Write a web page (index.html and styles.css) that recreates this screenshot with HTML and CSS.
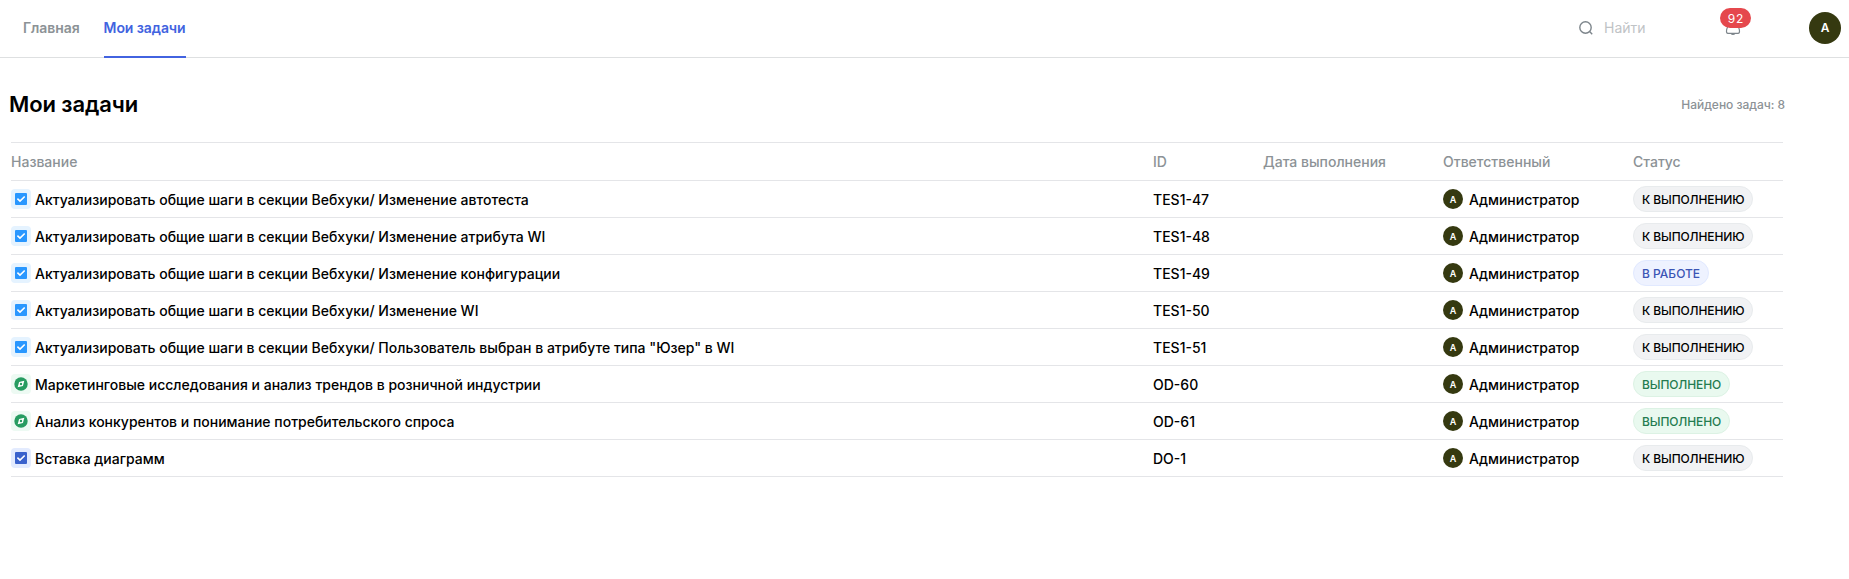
FILE: index.html
```html
<!DOCTYPE html>
<html lang="ru">
<head>
<meta charset="utf-8">
<title>Мои задачи</title>
<link rel="stylesheet" href="styles.css">
</head>
<body>
<svg class="sprite" aria-hidden="true">
  <symbol id="check" viewBox="0 0 20 20">
    <rect x="4" y="4" width="12" height="12" rx="1" fill="currentColor"/>
    <path d="M6.4 9.6 9 12.1 13.7 7.5" fill="none" stroke="#fff" stroke-width="1.6"/>
  </symbol>
  <symbol id="compass" viewBox="0 0 20 20">
    <circle cx="10" cy="10" r="6.7" fill="currentColor"/>
    <path d="M13.3 6.7 11.9 11.9 6.7 13.3 8.1 8.1Z" fill="#fff"/>
    <circle cx="10" cy="10" r="1.2" fill="currentColor"/>
  </symbol>
</svg>
<header class="topbar">
  <nav class="tabs">
    <a class="tab">Главная</a>
    <a class="tab tab-active">Мои задачи</a>
  </nav>
  <div class="tools">
    <div class="search">
      <svg class="search-icon" viewBox="0 0 14 14"><circle cx="6.5" cy="6.5" r="5.7"/><path d="M10.6 10.6 13.2 13.2"/></svg>
      <span>Найти</span>
    </div>
    <div class="bell">
      <svg class="bell-icon" viewBox="0 0 16 18"><path d="M8 1a4.500 4.500 0 0 0-4.500 4.500c0 2-1.600 3-1.900 5.500-.3 2.200 0 3.300 1.400 3.300H13c1.400 0 1.700-1.100 1.400-3.300-.3-2.500-1.900-3.500-1.900-5.500A4.500 4.500 0 0 0 8 1ZM6.300 14.700c.6 1 2.800 1 3.400 0"/></svg>
      <span class="count">92</span>
    </div>
    <div class="avatar avatar-large">A</div>
  </div>
</header>
<main class="page">
  <div class="heading">
    <h1 class="title">Мои задачи</h1>
    <span class="found">Найдено задач: 8</span>
  </div>
  <div class="table">
    <div class="row head"><div>Название</div><div>ID</div><div>Дата выполнения</div><div>Ответственный</div><div>Статус</div></div>
    <div class="row"><div class="name"><svg class="type sky"><use href="#check"/></svg><span class="label">Актуализировать общие шаги в секции Вебхуки/ Изменение автотеста</span></div><div class="key">TES1-47</div><div></div><div class="person"><span class="avatar">A</span><span class="label">Администратор</span></div><div><span class="status">К ВЫПОЛНЕНИЮ</span></div></div>
    <div class="row"><div class="name"><svg class="type sky"><use href="#check"/></svg><span class="label">Актуализировать общие шаги в секции Вебхуки/ Изменение атрибута WI</span></div><div class="key">TES1-48</div><div></div><div class="person"><span class="avatar">A</span><span class="label">Администратор</span></div><div><span class="status">К ВЫПОЛНЕНИЮ</span></div></div>
    <div class="row"><div class="name"><svg class="type sky"><use href="#check"/></svg><span class="label">Актуализировать общие шаги в секции Вебхуки/ Изменение конфигурации</span></div><div class="key">TES1-49</div><div></div><div class="person"><span class="avatar">A</span><span class="label">Администратор</span></div><div><span class="status working">В РАБОТЕ</span></div></div>
    <div class="row"><div class="name"><svg class="type sky"><use href="#check"/></svg><span class="label">Актуализировать общие шаги в секции Вебхуки/ Изменение WI</span></div><div class="key">TES1-50</div><div></div><div class="person"><span class="avatar">A</span><span class="label">Администратор</span></div><div><span class="status">К ВЫПОЛНЕНИЮ</span></div></div>
    <div class="row"><div class="name"><svg class="type sky"><use href="#check"/></svg><span class="label">Актуализировать общие шаги в секции Вебхуки/ Пользователь выбран в атрибуте типа "Юзер" в WI</span></div><div class="key">TES1-51</div><div></div><div class="person"><span class="avatar">A</span><span class="label">Администратор</span></div><div><span class="status">К ВЫПОЛНЕНИЮ</span></div></div>
    <div class="row"><div class="name"><svg class="type green"><use href="#compass"/></svg><span class="label">Маркетинговые исследования и анализ трендов в розничной индустрии</span></div><div class="key">OD-60</div><div></div><div class="person"><span class="avatar">A</span><span class="label">Администратор</span></div><div><span class="status done">ВЫПОЛНЕНО</span></div></div>
    <div class="row"><div class="name"><svg class="type green"><use href="#compass"/></svg><span class="label">Анализ конкурентов и понимание потребительского спроса</span></div><div class="key">OD-61</div><div></div><div class="person"><span class="avatar">A</span><span class="label">Администратор</span></div><div><span class="status done">ВЫПОЛНЕНО</span></div></div>
    <div class="row"><div class="name"><svg class="type navy"><use href="#check"/></svg><span class="label">Вставка диаграмм</span></div><div class="key">DO-1</div><div></div><div class="person"><span class="avatar">A</span><span class="label">Администратор</span></div><div><span class="status">К ВЫПОЛНЕНИЮ</span></div></div>
  </div>
</main>
</body>
</html>
```

FILE: styles.css
```css
* { box-sizing: border-box; }
body {
  margin: 0;
  background: #fff;
  color: #000;
  font: 500 14px/20px Inter, sans-serif;
}
.sprite { display: none; }
.topbar {
  display: flex;
  justify-content: space-between;
  height: 58px;
  padding: 0 8px 0 23px;
  border-bottom: 1px solid #dee0e1;
}
.tabs { display: flex; gap: 24px; height: 58px; }
.tab { height: 58px; padding-top: 18px; color: #8c9296; font-weight: 600; letter-spacing: -.08px; }
.tab-active { color: #4263e0; border-bottom: 2px solid #4263e0; }
.tools { display: flex; align-items: center; height: 56px; }
.search {
  display: flex;
  align-items: center;
  gap: 11px;
  width: 146px;
  color: #bfc3c6;
  font-weight: 400;
}
.search-icon { width: 14px; height: 14px; fill: none; stroke: #7d858b; stroke-width: 1.4; }
.bell { position: relative; width: 84px; height: 18px; }
.bell-icon { display: block; width: 16px; height: 18px; fill: none; stroke: #7d858b; stroke-width: 1.2; }
.count {
  position: absolute;
  left: -5px;
  top: -11px;
  width: 31px;
  height: 20px;
  border-radius: 10px;
  background: #e5484d;
  color: #fff;
  font-size: 12px;
  font-weight: 400;
  letter-spacing: .8px;
  line-height: 21px;
  text-indent: 1px;
  text-align: center;
}
.avatar {
  flex: none;
  width: 20px;
  height: 20px;
  border-radius: 50%;
  background: #353910;
  color: #fff;
  font-size: 9px;
  font-weight: 600;
  line-height: 21px;
  text-align: center;
}
.avatar-large { width: 32px; height: 32px; font-size: 12px; line-height: 32px; }
.page { padding: 30px 66px 0 11px; }
.heading {
  display: flex;
  align-items: center;
  justify-content: space-between;
  height: 32px;
  margin: 0 -2px 22px;
}
.title { margin: 0; font-size: 22px; font-weight: 600; line-height: 32px; letter-spacing: -.1px; }
.found { padding-top: 2px; color: #8c9296; font-size: 12px; letter-spacing: -.03px; }
.table { border-top: 1px solid #e4e5e8; }
.row {
  display: grid;
  grid-template-columns: 1142px 110px 180px 190px 150px;
  align-items: center;
  height: 37px;
  border-bottom: 1px solid #e4e5e8;
}
.head { height: 38px; color: #8c9296; }
.name, .person { display: flex; align-items: center; }
.name { gap: 4px; }
.person { gap: 6px; }
.label, .key { padding-top: 2px; }
.type { flex: none; width: 20px; height: 20px; border-radius: 4px; }
.sky { color: #2997ff; background: #e5f3ff; }
.green { color: #279c61; background: #edfaf3; }
.navy { color: #3a62cc; background: #e3ebfe; }
.status {
  display: block;
  width: fit-content;
  height: 26px;
  padding: 0 8px;
  border: 1px solid #e8ebed;
  border-radius: 13px;
  background: #f1f2f4;
  font-size: 12px;
  letter-spacing: -.1px;
  line-height: 25px;
}
.working { border-color: #e1e9ff; background: #eef2ff; color: #3b55b5; letter-spacing: 0; }
.done { border-color: #dcf2e4; background: #e9f9ef; color: #247c50; }
```
